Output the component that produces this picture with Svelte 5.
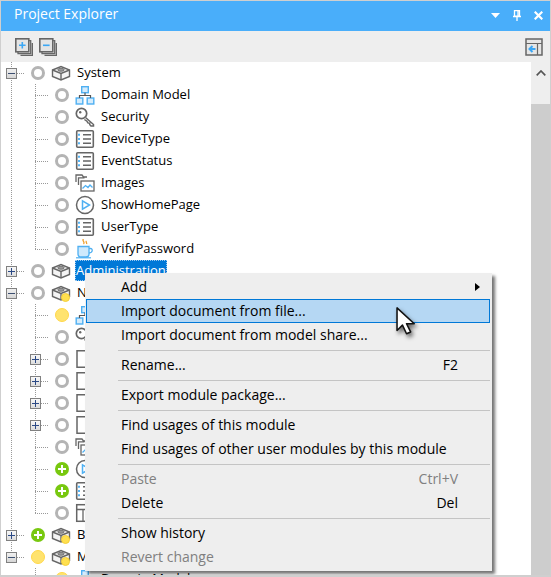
<script>
  const rows = [
    { exp: "minus", status: "none", icon: "module", label: "System" },
    { rail: true, status: "none", icon: "domain", label: "Domain Model" },
    { rail: true, status: "none", icon: "key", label: "Security" },
    { rail: true, status: "none", icon: "list", label: "DeviceType" },
    { rail: true, status: "none", icon: "list", label: "EventStatus" },
    { rail: true, status: "none", icon: "images", label: "Images" },
    { rail: true, status: "none", icon: "play", label: "ShowHomePage" },
    { rail: true, status: "none", icon: "list", label: "UserType" },
    { rail: true, last: true, status: "none", icon: "coffee", label: "VerifyPassword" },
    { exp: "plus", status: "none", icon: "module", label: "Administration", selected: true },
    { exp: "minus", status: "none", icon: "module", badge: true, label: "N" },
    { rail: true, status: "yellow", icon: "domain" },
    { rail: true, status: "none", icon: "key" },
    { rail: true, exp: "plus", status: "none", icon: "page" },
    { rail: true, exp: "plus", status: "none", icon: "page" },
    { rail: true, exp: "plus", status: "none", icon: "page" },
    { rail: true, exp: "plus", status: "none", icon: "page" },
    { rail: true, status: "none", icon: "images" },
    { rail: true, status: "green", icon: "play" },
    { rail: true, status: "green", icon: "list" },
    { rail: true, last: true, status: "none", icon: "table" },
    { exp: "plus", status: "green", icon: "module", badge: true, label: "B" },
    { exp: "minus", last: true, status: "yellow", icon: "module", badge: true, label: "M" },
    { blank: true, status: "yellow", icon: "domain", label: "Domain Model" },
  ];

  const menu = [
    { label: "Add", arrow: true },
    { label: "Import document from file...", active: true },
    { label: "Import document from model share..." },
    { sep: true },
    { label: "Rename...", key: "F2" },
    { sep: true },
    { label: "Export module package..." },
    { sep: true },
    { label: "Find usages of this module" },
    { label: "Find usages of other user modules by this module" },
    { sep: true },
    { label: "Paste", key: "Ctrl+V", disabled: true },
    { label: "Delete", key: "Del" },
    { sep: true },
    { label: "Show history" },
    { label: "Revert change", disabled: true },
  ];
</script>

{#snippet icon(name)}
  <svg class="icon" viewBox="0 0 20 20" width="20" height="20" fill="none" stroke="#666" stroke-width="1.4">
    {#if name == "module"}
      <path d="M1.500 7 10 3.500 18.500 7v6.500L10 17l-8.500-3.500z" fill="#f4f4f4" />
      <path d="M1.500 7 10 10.500 18.500 7M10 10.500V17" />
      <ellipse cx="10" cy="6.800" rx="3.200" ry="1.500" fill="#999" stroke="#666" stroke-width="0.800" />
    {:else if name == "domain"}
      <g stroke="#4fb0f2" stroke-width="1.400">
        <rect x="6.700" y="1.700" width="6.600" height="6" fill="#d5ecfc" />
        <rect x="1.200" y="13" width="6.600" height="6" fill="#d5ecfc" />
        <rect x="12.200" y="13" width="6.600" height="6" fill="#d5ecfc" />
      </g>
      <path d="M10 7.700v3M4.500 13v-2.500h11V13" stroke="#555" stroke-width="1.200" />
    {:else if name == "key"}
      <circle cx="6.500" cy="6.500" r="5.200" fill="#fff" stroke-width="1.700" />
      <circle cx="5.200" cy="5.200" r="1.200" fill="#666" stroke="none" />
      <path d="m10.500 10.500 8 7v1.500h-2.500l-1.200-1.300-.2-1.500-1.700-.3-1-1.700-2.500-1.700" fill="#fff" stroke-width="1.500" />
    {:else if name == "list"}
      <rect x="1.700" y="1.700" width="16.600" height="16.600" rx="1" fill="#fff" stroke-width="1.600" />
      <path d="M3 5.700h3M3 10h3M3 14.300h3" stroke="#55b4f5" stroke-width="2" stroke-dasharray="2 1" />
      <path d="M8 5.700h8M8 10h8M8 14.300h8" stroke-width="1.600" />
    {:else if name == "images"}
      <path d="M1 9V2h6l1.500 2H12M3.500 12V4.800h6" stroke-width="1.300" />
      <rect x="6" y="8" width="13" height="10" fill="#fff" stroke-width="1.300" />
      <path d="m7.500 15.500 3-3 2.500 2 2-2.500 2.500 2.500" stroke="#4fb0f2" stroke-width="1.300" />
    {:else if name == "play"}
      <circle cx="10" cy="10" r="8.500" fill="#fff" stroke-width="1.500" />
      <path d="M7.500 5.800 14.500 10l-7 4.200z" stroke="#4fb0f2" stroke-width="1.500" />
    {:else if name == "coffee"}
      <path d="M8.500 0c-2 1.800 2 2.800 0 5M11.500 2c-1.200 1 .8 1.800 0 3" stroke="#f0a030" stroke-width="1.300" />
      <path d="M3 7.500h11v7.500c0 2-1.500 3-3 3H6c-1.500 0-3-1-3-3z" fill="#cfe9fc" stroke="#4fb0f2" stroke-width="1.300" />
      <path d="M14 9.500h1.500c2.500 0 2.500 4.500-1.500 4.500" stroke="#4fb0f2" stroke-width="1.300" />
      <path d="M1 18.800h15" stroke="#4fb0f2" stroke-width="1.200" />
    {:else if name == "page"}
      <path d="M2 1.700h10l5 5v11.600H2z" fill="#fff" stroke-width="1.500" />
    {:else if name == "table"}
      <rect x="1.700" y="1.700" width="16.600" height="16.600" fill="#fff" stroke-width="1.500" />
      <path d="M1.700 6.500h16.600M8 6.500v11.800" stroke-width="1.300" />
    {/if}
  </svg>
{/snippet}

{#snippet stack(sign)}
  <svg viewBox="0 0 18 18" width="18" height="18" fill="none" stroke="#666" stroke-width="1.300">
    <path d="M14 2.700h1.700v13H3V14M17.400 5v12.400H5.500" />
    <rect x="0.800" y="0.800" width="13" height="13" fill="#e4e4e4" stroke-width="1.600" />
    <path d={sign == "plus" ? "M4 7.300h6.600M7.300 4v6.600" : "M4 7.300h6.600"} stroke="#3ba7f5" stroke-width="1.600" />
  </svg>
{/snippet}

<div class="window">
  <header class="title">
    <span class="title-text">Project Explorer</span>
    <div class="title-buttons">
      <svg viewBox="0 0 9 5" width="9" height="5"><path d="M0 0h9L4.500 5z" fill="#fff" /></svg>
      <svg viewBox="0 0 8 11" width="8" height="11" fill="none" stroke="#fff" stroke-width="1.300">
        <path d="M1.500.7h5v5.500h-5zM0 6.500h8M4 6.500V11M5 1v5" />
      </svg>
      <svg viewBox="0 0 9 9" width="9" height="9" stroke="#fff" stroke-width="2.200"><path d="m.7.700 7.600 7.600M8.300.700.7 8.300" /></svg>
    </div>
  </header>

  <div class="toolbar">
    <div class="tool-group">
      {@render stack("plus")}
      {@render stack("minus")}
    </div>
    <svg viewBox="0 0 18 18" width="18" height="18" fill="none" stroke="#666" stroke-width="1.500">
      <rect x="1" y="1" width="16" height="16" fill="#e6e6e6" />
      <path d="M1 5.500h16M12.500 5.500V17" stroke-width="1.200" />
      <path d="M10.500 11H5M7.500 8 4.500 11l3 3" stroke="#3ba7f5" stroke-width="2" />
    </svg>
  </div>

  <div class="body">
    <div class="tree">
      {#each rows as row}
        <div class="row">
          {#if row.rail}
            <span class="rail"></span>
          {:else if row.blank}
            <span class="rail blank"></span>
          {/if}
          <span class="twig" class:end={row.last}>
            {#if row.exp}
              <span class="exp" class:minus={row.exp == "minus"}></span>
            {/if}
          </span>
          <span class="status-cell">
            <span class="status {row.status}"></span>
          </span>
          <span class="icon-cell">
            {@render icon(row.icon)}
            {#if row.badge}
              <span class="badge"></span>
            {/if}
          </span>
          {#if row.label}
            <span class="label" class:selected={row.selected}>{row.label}</span>
          {/if}
        </div>
      {/each}
    </div>

    <div class="scrollbar">
      <div class="scroll-btn">
        <svg viewBox="0 0 10 6" width="10" height="6" fill="none" stroke="#555" stroke-width="1.700"><path d="m.7 5.300 4.300-4.300 4.300 4.300" /></svg>
      </div>
      <div class="scroll-track"></div>
    </div>
  </div>

  <div class="menu">
    {#each menu as item}
      {#if item.sep}
        <div class="sep"></div>
      {:else}
        <div class="item" class:active={item.active} class:disabled={item.disabled}>
          <span>{item.label}</span>
          {#if item.key}
            <span class="key">{item.key}</span>
          {/if}
          {#if item.arrow}
            <span class="arrow"></span>
          {/if}
        </div>
      {/if}
    {/each}
  </div>

  <svg class="cursor" viewBox="0 0 24 32" width="22" height="29">
    <path d="M1 1v25l6-6 4.500 9.500 4.500-2-4.500-9H20z" fill="#fff" stroke="#111" stroke-width="1.700" stroke-linejoin="round" />
  </svg>
</div>

<style>
  :global(body) {
    background: #fff;
  }
  .window {
    position: relative;
    box-sizing: border-box;
    width: 551px;
    height: 577px;
    border: solid #cfcfcf;
    border-width: 1px 1px 2px 1px;
    display: flex;
    flex-direction: column;
    overflow: hidden;
    font-family: "Open Sans", "Noto Sans", sans-serif;
    font-size: 14px;
    color: #000;
    background: #fff;
  }
  .title {
    flex: none;
    box-sizing: border-box;
    height: 30px;
    padding: 0 7px 6px 13px;
    background: #49aefa;
    color: #fff;
    display: flex;
    align-items: center;
    justify-content: space-between;
  }
  .title-text {
    font-size: 14px;
  }
  .title-buttons {
    display: flex;
    align-items: center;
    gap: 13px;
    margin-top: 4px;
  }
  .toolbar {
    flex: none;
    height: 31px;
    background: #eeeeee;
    display: flex;
    align-items: center;
    justify-content: space-between;
    padding: 0 7px 0 14px;
  }
  .tool-group {
    display: flex;
    gap: 6px;
  }
  .body {
    flex: 1;
    min-height: 0;
    display: flex;
  }
  .tree {
    flex: 1;
    min-width: 0;
    overflow: hidden;
    font-size: 13px;
  }
  .row {
    height: 22px;
    display: flex;
    align-items: center;
    white-space: nowrap;
  }
  .rail,
  .twig {
    flex: none;
    width: 24px;
    height: 22px;
    background-repeat: no-repeat;
    display: flex;
    align-items: center;
  }
  .rail {
    background-image: repeating-linear-gradient(to bottom, #999 0 1px, transparent 1px 2px);
    background-size: 1px 100%;
    background-position: 10px 0;
  }
  .rail.blank {
    background-image: none;
  }
  .twig {
    background-image:
      repeating-linear-gradient(to bottom, #999 0 1px, transparent 1px 2px),
      repeating-linear-gradient(to right, #999 0 1px, transparent 1px 2px);
    background-size: 1px 100%, 14px 1px;
    background-position: 10px 0, 10px 11px;
  }
  .twig.end {
    background-size: 1px 11px, 14px 1px;
  }
  .exp {
    box-sizing: border-box;
    width: 11px;
    height: 11px;
    margin-left: 5px;
    border: 1px solid #808080;
    background-image:
      linear-gradient(#2c4a86, #2c4a86),
      linear-gradient(#2c4a86, #2c4a86),
      linear-gradient(#f8f8f8, #dcdcdc);
    background-size: 7px 1px, 1px 7px, 100% 100%;
    background-position: center, center, center;
    background-repeat: no-repeat;
  }
  .exp.minus {
    background-image:
      linear-gradient(#3c4f70, #3c4f70),
      linear-gradient(#f0f0f0, #d6d6d6);
    background-size: 7px 1px, 100% 100%;
  }
  .status-cell {
    flex: none;
    width: 26px;
    display: flex;
    justify-content: center;
  }
  .status {
    box-sizing: border-box;
    width: 14px;
    height: 14px;
    border-radius: 50%;
  }
  .status.none {
    border: 3px solid #b4b4b4;
    background: #fff;
  }
  .status.yellow {
    background: #ffe36e;
    border: 1.5px solid #ffd84a;
  }
  .status.green {
    background-color: #78c80f;
    background-image: linear-gradient(#fff, #fff), linear-gradient(#fff, #fff);
    background-size: 8px 2px, 2px 8px;
    background-position: center;
    background-repeat: no-repeat;
  }
  .icon-cell {
    flex: none;
    position: relative;
    width: 26px;
    height: 20px;
  }
  .icon {
    display: block;
  }
  .badge {
    position: absolute;
    left: 10px;
    top: 10px;
    box-sizing: border-box;
    width: 9px;
    height: 9px;
    border-radius: 50%;
    background: #ffe04f;
    border: 1px solid #f5cf3a;
  }
  .label {
    align-self: flex-start;
    line-height: 20px;
    padding-bottom: 1px;
  }
  .label.selected {
    margin-left: -2px;
    padding-left: 1px;
    padding-right: 1px;
    background: #0078d7;
    color: #fff;
    outline: 1px dotted #9cc8ee;
    outline-offset: -1px;
  }
  .scrollbar {
    flex: none;
    width: 19px;
    background: #eeeeee;
    display: flex;
    flex-direction: column;
  }
  .scroll-btn {
    height: 42px;
    padding-top: 8px;
    box-sizing: border-box;
    display: flex;
    justify-content: center;
  }
  .scroll-track {
    flex: 1;
    background: #cdcdcd;
  }
  .menu {
    position: absolute;
    left: 84px;
    top: 272px;
    box-sizing: border-box;
    width: 407px;
    padding: 2px 2px 2px 1px;
    background: #eeeeee;
    box-shadow: 3px 3px 3px rgba(0, 0, 0, 0.55);
  }
  .item {
    box-sizing: border-box;
    height: 24px;
    padding: 0 31px 2px 34px;
    display: flex;
    align-items: center;
    justify-content: space-between;
    position: relative;
    border: 1px solid transparent;
  }
  .item.active {
    background: #b5d7f3;
    border-color: #0078d7;
  }
  .item.disabled {
    color: #808080;
  }
  .arrow {
    position: absolute;
    right: 9px;
    top: 7px;
    border-left: 5px solid #000;
    border-top: 4px solid transparent;
    border-bottom: 4px solid transparent;
  }
  .sep {
    height: 1px;
    margin: 3px 0 2px 32px;
    background: #c4c4c4;
  }
  .cursor {
    position: absolute;
    left: 395px;
    top: 306px;
    filter: drop-shadow(2px 3px 2px rgba(0, 0, 0, 0.55));
  }
</style>
